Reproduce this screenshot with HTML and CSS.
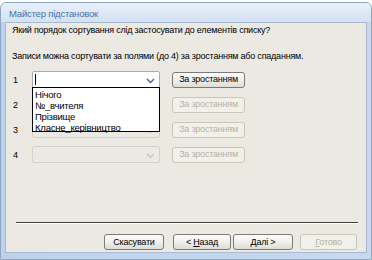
FILE: index.html
```html
<!DOCTYPE html>
<html>
<head>
<meta charset="utf-8">
<link rel="stylesheet" href="styles.css">
</head>
<body>
<div class="window">
  <div class="titlebar">Майстер підстановок</div>
  <div class="client">
    <div class="question">Який порядок сортування слід застосувати до елементів списку?</div>
    <div class="hint">Записи можна сортувати за полями (до 4) за зростанням або спаданням.</div>
    <div class="rows">
      <div class="row">
        <span class="num">1</span>
        <div class="combo active">
          <span class="caret"></span>
          <svg class="arrow" width="9" height="6" viewBox="0 0 9 6"><path d="M1 1 L4.5 4.5 L8 1" fill="none" stroke="#4d6185" stroke-width="1.4"/></svg>
          <div class="list">
            <div class="item">Нічого</div>
            <div class="item">№_вчителя</div>
            <div class="item">Прізвище</div>
            <div class="item">Класне_керівництво</div>
          </div>
        </div>
        <button class="btn sort">За зростанням</button>
      </div>
      <div class="row">
        <span class="num">2</span>
        <div class="combo disabled">
          <svg class="arrow" width="9" height="6" viewBox="0 0 9 6"><path d="M1 1 L4.5 4.5 L8 1" fill="none" stroke="#c9c7ba" stroke-width="1.4"/></svg>
        </div>
        <button class="btn sort" disabled>За зростанням</button>
      </div>
      <div class="row">
        <span class="num">3</span>
        <div class="combo disabled">
          <svg class="arrow" width="9" height="6" viewBox="0 0 9 6"><path d="M1 1 L4.5 4.5 L8 1" fill="none" stroke="#c9c7ba" stroke-width="1.4"/></svg>
        </div>
        <button class="btn sort" disabled>За зростанням</button>
      </div>
      <div class="row">
        <span class="num">4</span>
        <div class="combo disabled">
          <svg class="arrow" width="9" height="6" viewBox="0 0 9 6"><path d="M1 1 L4.5 4.5 L8 1" fill="none" stroke="#c9c7ba" stroke-width="1.4"/></svg>
        </div>
        <button class="btn sort" disabled>За зростанням</button>
      </div>
    </div>
    <div class="spacer"></div>
    <div class="separator"></div>
    <div class="footer">
      <button class="btn foot">Скасувати</button>
      <button class="btn foot back">&lt; <u>Н</u>азад</button>
      <button class="btn foot next"><u>Д</u>алі &gt;</button>
      <button class="btn foot done" disabled><u>Г</u>отово</button>
    </div>
  </div>
</div>
</body>
</html>
```

FILE: styles.css
```css
* { box-sizing: border-box; }
html, body { margin: 0; padding: 0; }
body {
  width: 372px;
  height: 260px;
  overflow: hidden;
  background: #ffffff;
  font-family: "Liberation Sans", Arial, sans-serif;
  font-size: 9px;
  letter-spacing: -0.22px;
  color: #000;
  white-space: nowrap;
}
.window {
  margin-top: 2px;
  width: 372px;
  height: 258px;
  display: flex;
  flex-direction: column;
  background: linear-gradient(to right, #bfd2ea, #c8d9ee);
  border: 1px solid #8fa7c6;
  border-radius: 6px 6px 0 0;
  padding: 0 4px 6px 4px;
}
.titlebar {
  height: 19px;
  margin: 0 -4px;
  padding: 5px 0 0 8px;
  background: linear-gradient(to bottom, #e9f0f9, #d3e1f2);
  border-radius: 5px 5px 0 0;
  color: #4673ad;
  font-size: 9.5px;
  line-height: 12px;
  letter-spacing: -0.2px;
}
.client {
  flex: 1;
  display: flex;
  flex-direction: column;
  background: #ece9e3;
  border: 1px solid #a8bad3;
  padding: 1px 6px 0 6px;
}
.question { height: 12px; line-height: 12px; }
.hint { margin-top: 14px; height: 12px; line-height: 12px; }
.rows {
  margin-top: 9px;
  display: flex;
  flex-direction: column;
  gap: 8px;
}
.row {
  display: flex;
  align-items: center;
  height: 17px;
}
.num { width: 20px; padding-left: 1px; }
.combo {
  position: relative;
  width: 128px;
  height: 17px;
  border: 1px solid #a5acb5;
  border-radius: 2px;
  background: #fff;
}
.combo.disabled {
  border-color: #d3d1c8;
  background: #ebe9e4;
}
.caret {
  position: absolute;
  left: 2px;
  top: 2px;
  width: 1px;
  height: 11px;
  background: #000;
}
.arrow {
  position: absolute;
  right: 4px;
  top: 6px;
}
.list {
  position: absolute;
  left: -1px;
  top: 15px;
  width: 128px;
  height: 45px;
  background: #fff;
  border: 1px solid #000;
  padding-top: 1px;
  z-index: 5;
  font-size: 9.5px;
}
.item {
  height: 11px;
  line-height: 11px;
  padding-left: 2px;
}
.btn {
  font-family: "Liberation Sans", Arial, sans-serif;
  font-size: 9px;
  letter-spacing: -0.22px;
  color: #000;
  height: 16px;
  padding: 0;
  border: 1px solid #7a7a7a;
  border-radius: 3px;
  background: linear-gradient(to bottom, #fcfcfb 0%, #f0efeb 50%, #dedcd4 100%);
  line-height: 13px;
}
.btn:disabled {
  color: #b6b3a8;
  border-color: #c9c7ba;
  background: #f2f0ea;
}
.sort {
  margin-left: 12px;
  width: 73px;
}
.spacer { flex: 1; }
.separator {
  height: 2px;
  border-top: 1px solid #404040;
  border-bottom: 1px solid #ffffff;
  margin: 0 2px 0 4px;
}
.footer {
  display: flex;
  justify-content: flex-end;
  padding: 10px 3px 2px 0;
}
.foot { width: 60px; }
.back { margin-left: 9px; width: 58px; }
.next { margin-left: 2px; width: 60px; }
.done { margin-left: 7px; width: 57px; }
u { text-decoration: underline; }
```
